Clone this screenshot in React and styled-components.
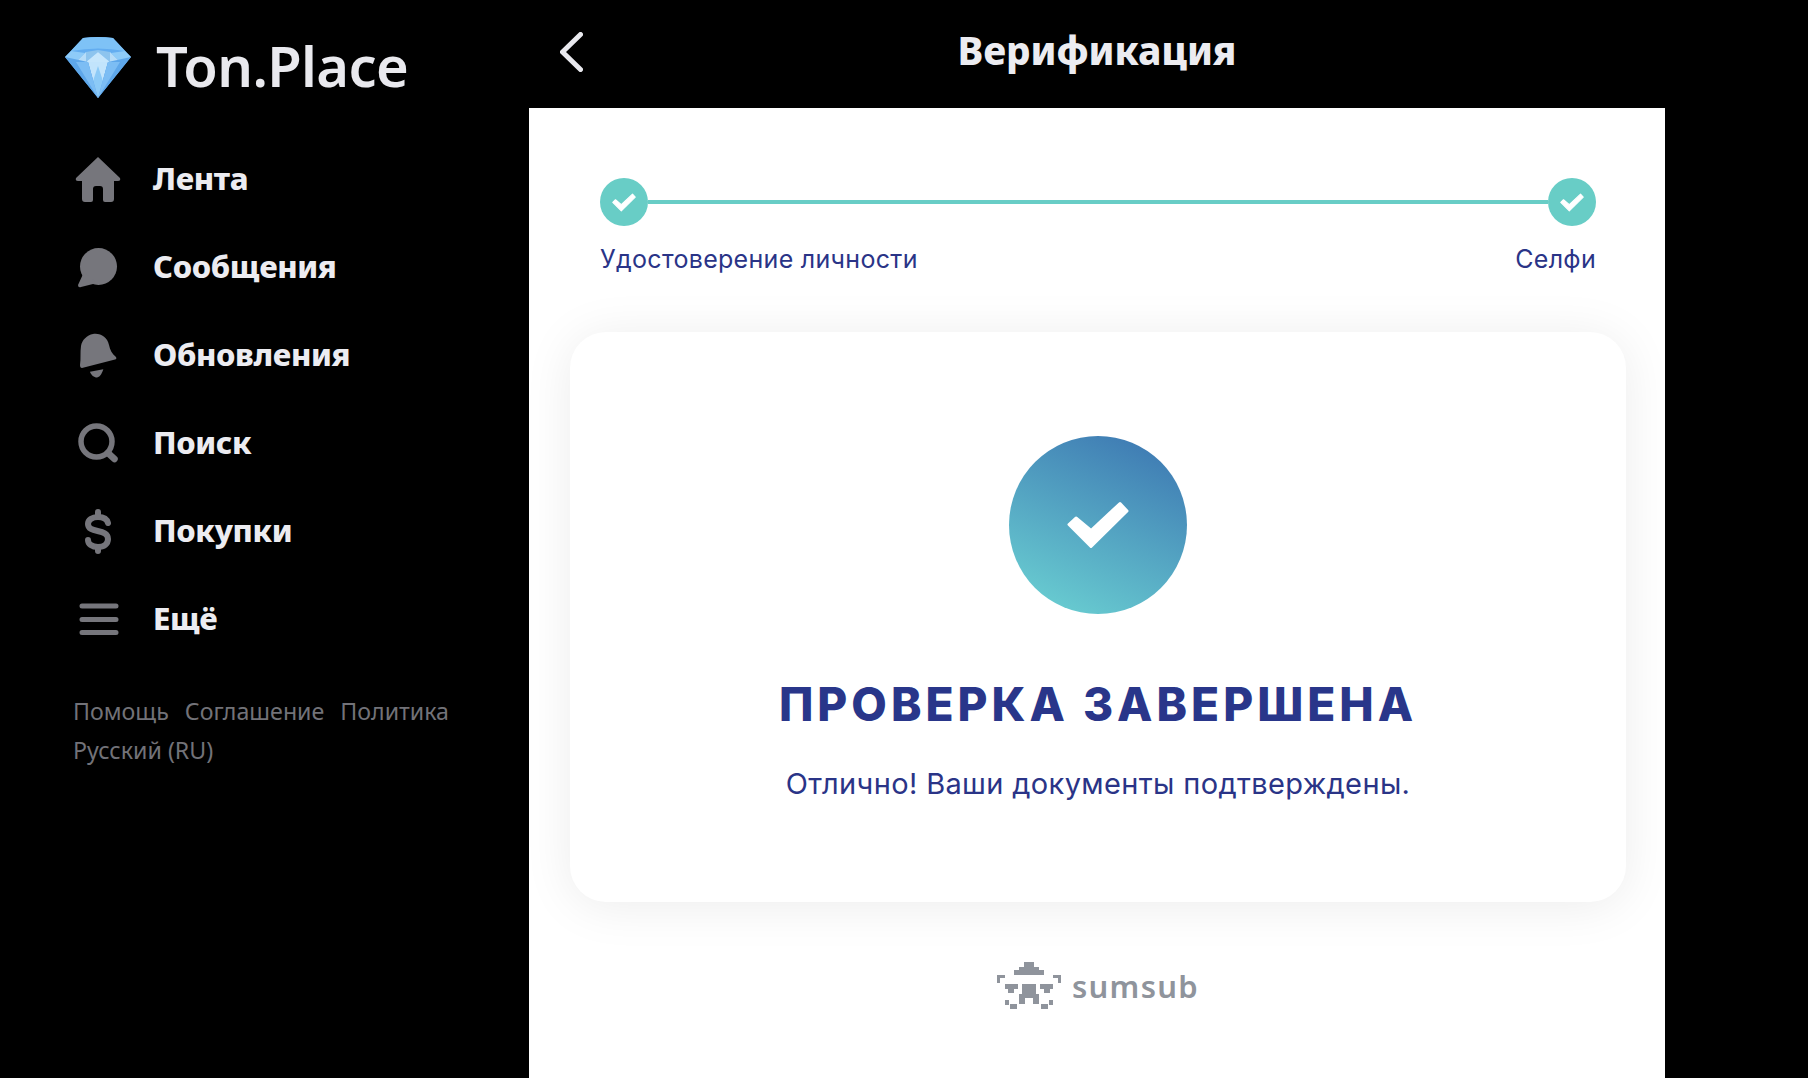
import React from "react";
import styled, { createGlobalStyle } from "styled-components";

const Global = createGlobalStyle`
  html, body { margin: 0; padding: 0; background: #000; height: 100%; }
  #root { height: 100%; }
`;
const Page = styled.div`
  width: 1808px; height: 1078px; background: #000; display: flex; overflow: hidden;
  font-family: "Noto Sans", "Open Sans", sans-serif;
`;
const Sidebar = styled.aside`
  width: 529px; flex: none; padding: 33px 0 0 65px; box-sizing: border-box;
  display: flex; flex-direction: column;
`;
const Logo = styled.div`
  display: flex; align-items: center; gap: 25px; height: 66px; margin-bottom: 35px;
  svg { margin-top: 3px; }
`;
const Brand = styled.span`
  font-size: 56px; font-weight: 600; color: #e9e9ee; letter-spacing: -0.6px; margin-top: -2px;
`;
const Nav = styled.nav`display: flex; flex-direction: column;`;
const NavRow = styled.div`
  display: flex; align-items: center; height: 88px; padding-left: 10px;
`;
const NavIcon = styled.span`
  width: 78px; flex: none; display: flex; align-items: center;
  svg { display: block; margin-top: 1px; }
`;
const NavLabel = styled.span`
  font-size: 31px; font-weight: 800; color: #ececf1; letter-spacing: -0.35px;
`;
const FootLinks = styled.div`
  margin: 30px 0 0 8px; display: flex; flex-wrap: wrap; column-gap: 16px; width: 400px;
`;
const FootLink = styled.span`
  font-size: 23.2px; line-height: 39px; color: #727278;
`;
const Main = styled.main`
  width: 1136px; flex: none; display: flex; flex-direction: column;
`;
const Header = styled.header`
  height: 108px; flex: none; position: relative; display: flex; align-items: center; justify-content: center;
  padding-bottom: 8px; box-sizing: border-box;
`;
const Back = styled.span`
  position: absolute; left: 31px; top: 32px; display: block;
  svg { display: block; }
`;
const HeaderTitle = styled.h1`
  margin: 0; font-size: 38.5px; font-weight: 800; color: #ececf1;
`;
const Panel = styled.section`
  flex: 1; background: #fff; padding: 70px 39px 0 41px; box-sizing: border-box;
  display: flex; flex-direction: column; font-family: "Inter", "Noto Sans", sans-serif;
`;
const Stepper = styled.div`
  margin: 0 30px; display: flex; align-items: center;
`;
const StepDot = styled.span`
  width: 48px; height: 48px; border-radius: 50%; background: #68cdc6; flex: none;
  display: flex; align-items: center; justify-content: center;
`;
const StepLine = styled.span`flex: 1; height: 4px; background: #68cdc6;`;
const StepLabels = styled.div`
  margin: 18px 30px 0 30px; display: flex; justify-content: space-between;
`;
const StepLabel = styled.span`
  font-size: 25px; line-height: 30px; color: #2a3487; letter-spacing: 0.3px;
`;
const Card = styled.div`
  margin-top: 58px; height: 570px; border-radius: 36px; background: #fff;
  box-shadow: 0 4px 50px rgba(0,0,0,0.08);
  display: flex; flex-direction: column; align-items: center; padding-top: 104px; box-sizing: border-box;
`;
const BigCheck = styled.div`
  width: 178px; height: 178px; border-radius: 50%;
  background: linear-gradient(205deg, #3a72b0 0%, #6dd5d4 100%);
  display: flex; align-items: center; justify-content: center;
`;
const Title = styled.h2`
  margin: 63px 0 0; font-size: 46px; line-height: 54px; font-weight: 800; color: #29368a; letter-spacing: 4px;
`;
const Sub = styled.p`
  margin: 35px 0 0; font-size: 29px; line-height: 36px; color: #2a3487; letter-spacing: 0.35px;
`;
const Powered = styled.div`
  margin-top: 60px; display: flex; align-items: center; justify-content: center; gap: 11px;
`;
const SumsubText = styled.span`
  font-family: "Noto Sans", sans-serif; font-size: 31px; font-weight: 600; color: #8f949c; letter-spacing: 1.3px; line-height: 40px;
`;

const c = "#76767c";
const Home = () => (
  <svg width="46" height="48" viewBox="0 0 46 48" fill={c}>
    <path d="M23 2 L45 23 Q46 26 43 26 H39 V44 Q39 47 36 47 H30 Q28 47 28 45 V34 Q28 31 25 31 H21 Q18 31 18 34 V45 Q18 47 16 47 H10 Q7 47 7 44 V26 H3 Q0 26 1 23 Z" />
  </svg>
);
const Chat = () => (
  <svg width="46" height="46" viewBox="0 0 46 46" fill={c}>
    <circle cx="23.5" cy="22.5" r="18.5" />
    <path d="M9 28 L3 41 Q3 44 6 43 L22 39 Z" />
  </svg>
);
const Bell = () => (
  <svg width="46" height="46" viewBox="0 0 46 46" fill={c}>
    <path d="M18 2 C26 1 32 5 34 13 C35 18 37 22 41 25 Q42 27 40 27.5 L7 36 Q5 36 5 33 C6 27 5 20 6 14 C7 8 12 3 18 2 Z" />
    <path d="M15 39.7 L28.3 37.3 C27 41 25.5 45 22 45.5 C19 45.5 16 43 15 39.7 Z" />
  </svg>
);
const Search = () => (
  <svg width="46" height="46" viewBox="0 0 46 46" fill="none" stroke={c} strokeWidth="5.5" strokeLinecap="round">
    <circle cx="21.5" cy="21.5" r="15.5" />
    <path d="M33 33 L39.5 39" strokeWidth="6.5" />
  </svg>
);
const Dollar = () => (
  <svg width="46" height="46" viewBox="0 0 46 46" fill="none" stroke={c} strokeWidth="6" strokeLinecap="round" strokeLinejoin="round">
    <path d="M33 15 C32 11 28 9 23 9 C17 9 13 12 13 16 C13 26 33 20 33 31 C33 36 29 39 23 39 C17 39 13 36 13 32" />
    <path d="M23 4 V9 M23 39 V43" />
  </svg>
);
const Menu = () => (
  <svg width="46" height="46" viewBox="0 0 46 46" fill="none" stroke={c} strokeWidth="5" strokeLinecap="round">
    <path d="M7 10 H41 M7 23.5 H41 M7 36.5 H41" />
  </svg>
);
const Diamond = () => (
  <svg width="66" height="61" viewBox="0 0 66 61">
    <path d="M18 1 Q33 -1 48 1 L66 20 L33 61 L0 20 Z" fill="#63adf0" />
    <path d="M18 1 Q33 -1 48 1 L60 14 Q33 9 6 14 Z" fill="#7ec2f6" />
    <path d="M6 14 L0 20 L11 25 L20 16 Z M60 14 L66 20 L55 25 L46 16 Z" fill="#8ecbf8" />
    <path d="M11 25 L21 15 V25 Z M55 25 L45 15 V25 Z" fill="#b6dcf8" />
    <path d="M21 15 L33 13 L45 15 V25 L33 15 L21 25 Z" fill="#8dc4ee" />
    <path d="M21 25 L33 15 L45 25 Z" fill="#c6e6fc" />
    <path d="M23 25 H43 L33 61 Z" fill="#c2e4fc" />
    <path d="M33 29 L38 44 L33 61 L28 44 Z" fill="#8ccaf7" />
    <path d="M0 20 L23 25 L33 61 Z M66 20 L43 25 L33 61 Z" fill="#5ea7ea" />
    <path d="M11 25 L23 25 L33 61 Z M55 25 L43 25 L33 61 Z" fill="#7cbdf4" />
  </svg>
);
const Chevron = () => (
  <svg width="23" height="40" viewBox="0 0 23 40" fill="none" stroke="#e9e9ee" strokeWidth="5" strokeLinecap="round" strokeLinejoin="round">
    <path d="M20.5 2.5 L2.5 20 L20.5 37.5" />
  </svg>
);
const Check = ({ w, h }) => (
  <svg width={w} height={h} viewBox="0 0 62 48" fill="#fff" stroke="#fff" strokeWidth="3" strokeLinejoin="round">
    <path d="M2 23.5 L9 17 L24 29.5 L53 2.5 L60 10 L24 45.5 Z" />
  </svg>
);
const SumsubLogo = () => (
  <svg width="64" height="47" viewBox="0 0 64 47" fill="#8f949c">
    <path d="M27 0 H37 V5 H42 V8 H47 V13 H17 V8 H22 V5 H27 Z" />
    <path d="M0 13 H8 V16 H3 V21 H0 Z M56 13 H64 V21 H61 V16 H56 Z" />
    <path d="M8 22 H21 V27 H17 V31 H11 V27 H8 Z M43 22 H56 V27 H53 V31 H47 V27 H43 Z" />
    <path d="M25 22 H39 V32 H42 V42 H36 V36 H28 V42 H22 V32 H25 Z" />
    <path d="M8 38 H12 V43 H8 Z M52 38 H56 V43 H52 Z M13 42 H20 V47 H13 Z M44 42 H51 V47 H44 Z" />
  </svg>
);

const items = [
  ["Лента", Home], ["Сообщения", Chat], ["Обновления", Bell],
  ["Поиск", Search], ["Покупки", Dollar], ["Ещё", Menu],
];

export default function App() {
  return (
    <Page>
      <Global />
      <Sidebar>
        <Logo><Diamond /><Brand>Ton.Place</Brand></Logo>
        <Nav>
          {items.map(([label, I]) => (
            <NavRow key={label}><NavIcon><I /></NavIcon><NavLabel>{label}</NavLabel></NavRow>
          ))}
        </Nav>
        <FootLinks>
          <FootLink>Помощь</FootLink><FootLink>Соглашение</FootLink><FootLink>Политика</FootLink>
          <FootLink>Русский (RU)</FootLink>
        </FootLinks>
      </Sidebar>
      <Main>
        <Header>
          <Back><Chevron /></Back>
          <HeaderTitle>Верификация</HeaderTitle>
        </Header>
        <Panel>
          <Stepper><StepDot><Check w={24} h={19} /></StepDot><StepLine /><StepDot><Check w={24} h={19} /></StepDot></Stepper>
          <StepLabels><StepLabel>Удостоверение личности</StepLabel><StepLabel>Селфи</StepLabel></StepLabels>
          <Card>
            <BigCheck><Check w={62} h={48} /></BigCheck>
            <Title>ПРОВЕРКА ЗАВЕРШЕНА</Title>
            <Sub>Отлично! Ваши документы подтверждены.</Sub>
          </Card>
          <Powered><SumsubLogo /><SumsubText>sumsub</SumsubText></Powered>
        </Panel>
      </Main>
    </Page>
  );
}
